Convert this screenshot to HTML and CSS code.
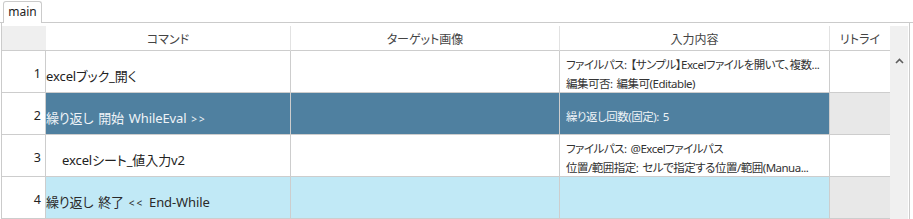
FILE: index.html
```html
<!DOCTYPE html>
<html lang="ja">
<head>
<meta charset="utf-8">
<link rel="stylesheet" href="styles.css">
</head>
<body>
<div class="tabstrip">
  <div class="tab">main</div>
</div>
<div class="panel">
  <div class="grid">
    <div class="h hnum"></div>
    <div class="h">コマンド</div>
    <div class="h">ターゲット画像</div>
    <div class="h">入力内容</div>
    <div class="h hlast">リトライ</div>

    <div class="c num">1</div>
    <div class="c cmd"><span>excelブック_開く</span></div>
    <div class="c"></div>
    <div class="c inp"><span>ファイルパス: 【サンプル】Excelファイルを開いて、複数...</span><span>編集可否: 編集可(Editable)</span></div>
    <div class="c retry"></div>

    <div class="c num">2</div>
    <div class="c cmd loop"><span>繰り返し 開始 WhileEval <small>&gt;&gt;</small></span></div>
    <div class="c loop"></div>
    <div class="c inp loop"><span>繰り返し回数(固定): 5</span></div>
    <div class="c retry grey"></div>

    <div class="c num">3</div>
    <div class="c cmd indent"><span>excelシート_値入力v2</span></div>
    <div class="c"></div>
    <div class="c inp"><span>ファイルパス: @Excelファイルパス</span><span>位置/範囲指定: セルで指定する位置/範囲(Manua...</span></div>
    <div class="c retry"></div>

    <div class="c num">4</div>
    <div class="c cmd end"><span>繰り返し 終了 <small>&lt;&lt;</small> End-While</span></div>
    <div class="c end"></div>
    <div class="c inp end"></div>
    <div class="c retry grey"></div>
  </div>
  <div class="scrollbar">
    <div class="corner"></div>
    <div class="sbtn">
      <svg width="9" height="6" viewBox="0 0 9 6"><path d="M1 5 L4.5 1.5 L8 5" fill="none" stroke="#5f5f5f" stroke-width="1.6"/></svg>
    </div>
  </div>
</div>
</body>
</html>
```

FILE: styles.css
```css
* { box-sizing: border-box; }
html, body { margin: 0; padding: 0; background: #fff; }
body {
  width: 913px;
  height: 219px;
  overflow: hidden;
  font-family: "Noto Sans", "Noto Sans CJK JP", sans-serif;
  font-feature-settings: "palt";
}
.tabstrip {
  height: 23px;
  padding: 1px 0 0 3px;
  border-bottom: 1px solid #cbcbcb;
  display: flex;
}
.tab {
  position: relative;
  z-index: 1;
  width: 39px;
  height: 22px;
  margin-bottom: -1px;
  border: 1px solid #cbcbcb;
  border-bottom: none;
  border-radius: 3px 3px 0 0;
  background: #fff;
  font-size: 12px;
  color: #222;
  text-align: center;
  line-height: 19px;
}
.panel {
  margin-left: 1px;
  width: 909px;
  height: 196px;
  border-left: 1px solid #cbcbcb;
  border-right: 1px solid #cbcbcb;
  padding-top: 3px;
  display: flex;
}
.grid {
  display: grid;
  grid-template-columns: 44px 245px 269px 270px 60px;
  grid-template-rows: 25px 42px 42px 42px 42px;
}
.h {
  border-right: 1px solid #e2e2e2;
  border-bottom: 1px solid #cdcdcd;
  font-size: 12px;
  color: #444;
  text-align: center;
  padding-top: 6px;
  line-height: 16px;
}
.hnum { background: #efefef; border-right: none; }
.hlast { border-right: none; }
.c {
  border-right: 1px solid #cdcdcd;
  border-bottom: 1px solid #cdcdcd;
  display: flex;
  align-items: center;
  padding-top: 4px;
  white-space: nowrap;
  overflow: hidden;
  color: #222;
}
.num {
  justify-content: flex-end;
  padding-right: 4px;
  padding-top: 3px;
  font-size: 12.5px;
  color: #222;
}
.cmd {
  font-size: 13px;
  letter-spacing: -0.1px;
  word-spacing: 1.5px;
  padding-top: 7px;
}
.cmd small { font-size: 10px; letter-spacing: 2px; }
.indent { padding-left: 16px; }
.inp {
  flex-direction: column;
  align-items: flex-start;
  justify-content: center;
  padding-left: 6px;
  padding-top: 5px;
  font-size: 11.5px;
  line-height: 19px;
  letter-spacing: -0.5px;
  word-spacing: 1.5px;
  color: #333;
}
.retry { border-right: none; }
.loop { background: #4f80a0; color: #eef3f7; }
.end { background: #c1e9f6; color: #2a2a2a; }
.grey { background: #e8e8e8; }
.scrollbar {
  width: 18px;
  background: #f0f0f0;
  display: flex;
  flex-direction: column;
}
.corner { height: 25px; }
.sbtn {
  height: 17px;
  display: flex;
  align-items: center;
  justify-content: center;
  padding-top: 2px;
}
```
